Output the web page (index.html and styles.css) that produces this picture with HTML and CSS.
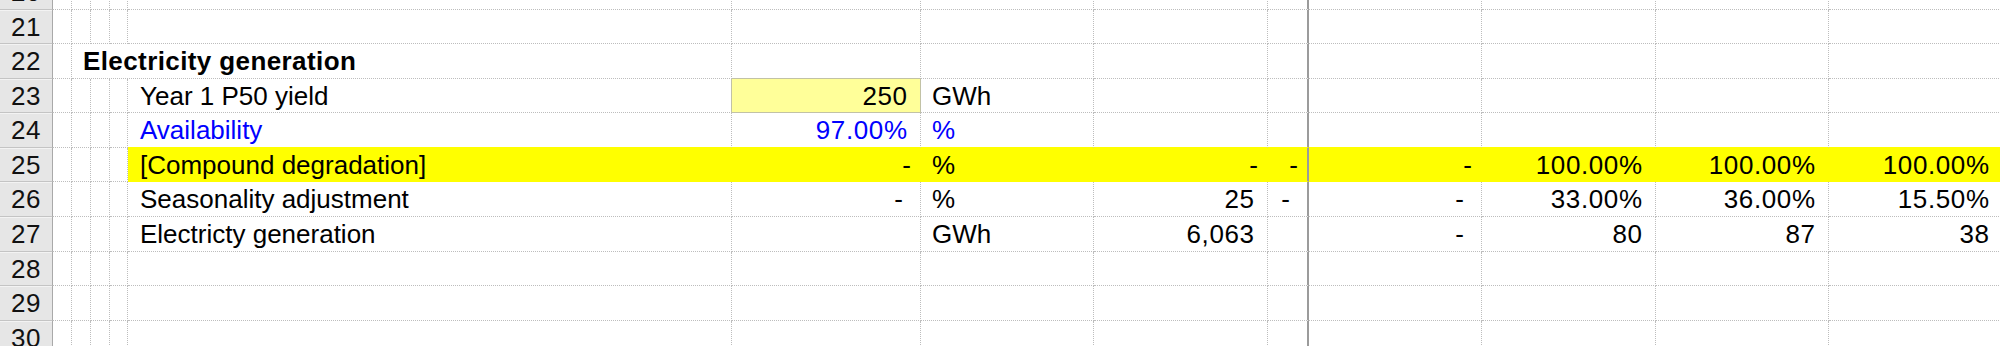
FILE: index.html
```html
<!DOCTYPE html>
<html>
<head>
<meta charset="utf-8">
<link rel="stylesheet" href="styles.css">
</head>
<body>
<div class="sheet">
  <div class="row">
    <div class="hd">20</div><div class="c"></div><div class="c"></div><div class="c"></div><div class="c"></div><div class="c"></div><div class="c"></div><div class="c"></div><div class="c"></div><div class="c fz"></div><div class="c"></div><div class="c"></div><div class="c"></div><div class="c"></div>
  </div>
  <div class="row">
    <div class="hd">21</div><div class="c"></div><div class="c"></div><div class="c"></div><div class="c"></div><div class="c"></div><div class="c"></div><div class="c"></div><div class="c"></div><div class="c fz"></div><div class="c"></div><div class="c"></div><div class="c"></div><div class="c"></div>
  </div>
  <div class="row">
    <div class="hd">22</div><div class="c"></div><div class="c title">Electricity generation</div><div class="c box-top"></div><div class="c"></div><div class="c"></div><div class="c fz"></div><div class="c"></div><div class="c"></div><div class="c"></div><div class="c"></div>
  </div>
  <div class="row">
    <div class="hd">23</div><div class="c"></div><div class="c"></div><div class="c"></div><div class="c"></div><div class="c lbl box-left">Year 1 P50 yield</div><div class="c num input">250</div><div class="c unit">GWh</div><div class="c"></div><div class="c fz"></div><div class="c"></div><div class="c"></div><div class="c"></div><div class="c"></div>
  </div>
  <div class="row blue">
    <div class="hd">24</div><div class="c"></div><div class="c"></div><div class="c"></div><div class="c"></div><div class="c lbl abv">Availability</div><div class="c num abv">97.00%</div><div class="c unit abv">%</div><div class="c abv"></div><div class="c fz abv"></div><div class="c abv"></div><div class="c abv"></div><div class="c abv"></div><div class="c abv"></div>
  </div>
  <div class="row">
    <div class="hd">25</div><div class="c"></div><div class="c"></div><div class="c"></div><div class="c"></div><div class="c lbl hi">[Compound degradation]</div><div class="c num dash-a hi">-</div><div class="c unit hi">%</div><div class="c num dash-a hi">-</div><div class="c num dash-a fz hi">-</div><div class="c num dash-a hi">-</div><div class="c num hi">100.00%</div><div class="c num hi">100.00%</div><div class="c num hi">100.00%</div>
  </div>
  <div class="row">
    <div class="hd">26</div><div class="c"></div><div class="c"></div><div class="c"></div><div class="c"></div><div class="c lbl">Seasonality adjustment</div><div class="c num dash-b">-</div><div class="c unit">%</div><div class="c num">25</div><div class="c num dash-b fz">-</div><div class="c num dash-b">-</div><div class="c num">33.00%</div><div class="c num">36.00%</div><div class="c num">15.50%</div>
  </div>
  <div class="row">
    <div class="hd">27</div><div class="c"></div><div class="c"></div><div class="c"></div><div class="c"></div><div class="c lbl">Electricty generation</div><div class="c"></div><div class="c unit">GWh</div><div class="c num">6,063</div><div class="c fz"></div><div class="c num dash-b">-</div><div class="c num">80</div><div class="c num">87</div><div class="c num">38</div>
  </div>
  <div class="row">
    <div class="hd">28</div><div class="c"></div><div class="c"></div><div class="c"></div><div class="c"></div><div class="c"></div><div class="c"></div><div class="c"></div><div class="c"></div><div class="c fz"></div><div class="c"></div><div class="c"></div><div class="c"></div><div class="c"></div>
  </div>
  <div class="row">
    <div class="hd">29</div><div class="c"></div><div class="c"></div><div class="c"></div><div class="c"></div><div class="c"></div><div class="c"></div><div class="c"></div><div class="c"></div><div class="c fz"></div><div class="c"></div><div class="c"></div><div class="c"></div><div class="c"></div>
  </div>
  <div class="row">
    <div class="hd">30</div><div class="c"></div><div class="c"></div><div class="c"></div><div class="c"></div><div class="c"></div><div class="c"></div><div class="c"></div><div class="c"></div><div class="c fz"></div><div class="c"></div><div class="c"></div><div class="c"></div><div class="c"></div>
  </div>
</div>
</body>
</html>
```
FILE: styles.css
```css
html, body {
  margin: 0;
  padding: 0;
  background: #ffffff;
}
body {
  width: 2000px;
  height: 346px;
  overflow: hidden;
  font-family: "Liberation Sans", Arial, sans-serif;
  font-size: 26px;
  color: #000000;
}
.sheet {
  width: 2003px;
  margin-top: -25.1px;
}
.row {
  display: grid;
  grid-template-columns: 53px 19px 19px 19px 18px 604px 189px 173px 174px 41px 173px 174px 173px 174px;
  height: 34.6px;
}
.c, .hd {
  box-sizing: border-box;
  height: 34.6px;
  line-height: 34.6px;
  white-space: nowrap;
  overflow: hidden;
}
.c {
  border-right: 1px dotted #bdbdbd;
  border-bottom: 1px dotted #bdbdbd;
}
.hd {
  background: #e6e6e6;
  border-right: 1px solid #a9a9a9;
  border-bottom: 1px solid #c4c4c4;
  box-shadow: inset 0 1px 0 #f3f3f3;
  text-align: center;
  color: #111111;
  letter-spacing: 0.6px;
}
.title {
  grid-column: span 4;
  font-weight: bold;
  padding-left: 11px;
  letter-spacing: 0.4px;
}
.lbl {
  padding-left: 12px;
}
.unit {
  padding-left: 11px;
}
.num {
  text-align: right;
  padding-right: 12.4px;
  letter-spacing: 0.6px;
}
.dash-a {
  padding-right: 9px;
  letter-spacing: 0;
}
.dash-b {
  padding-right: 17px;
  letter-spacing: 0;
}
.fz {
  border-right: 2px solid #9b9b9b;
}
.blue {
  color: #0000ff;
}
.blue .hd {
  color: #111111;
}
.input {
  background: #ffff99;
  border-right: 1px solid #c2c2a6;
  border-bottom: 1px solid #c2c2a6;
}
.box-top {
  border-bottom: 1px solid #c2c2a6;
}
.box-left {
  border-right: 1px solid #c2c2a6;
}
.abv {
  border-bottom: 1px solid #ffff00;
}
.hi {
  background: #ffff00;
  border-bottom: 1px solid #ffff00;
  border-right-style: solid;
  border-right-color: #ffff00;
}
.hi.fz {
  border-right: 2px solid #9b9b9b;
}
```
